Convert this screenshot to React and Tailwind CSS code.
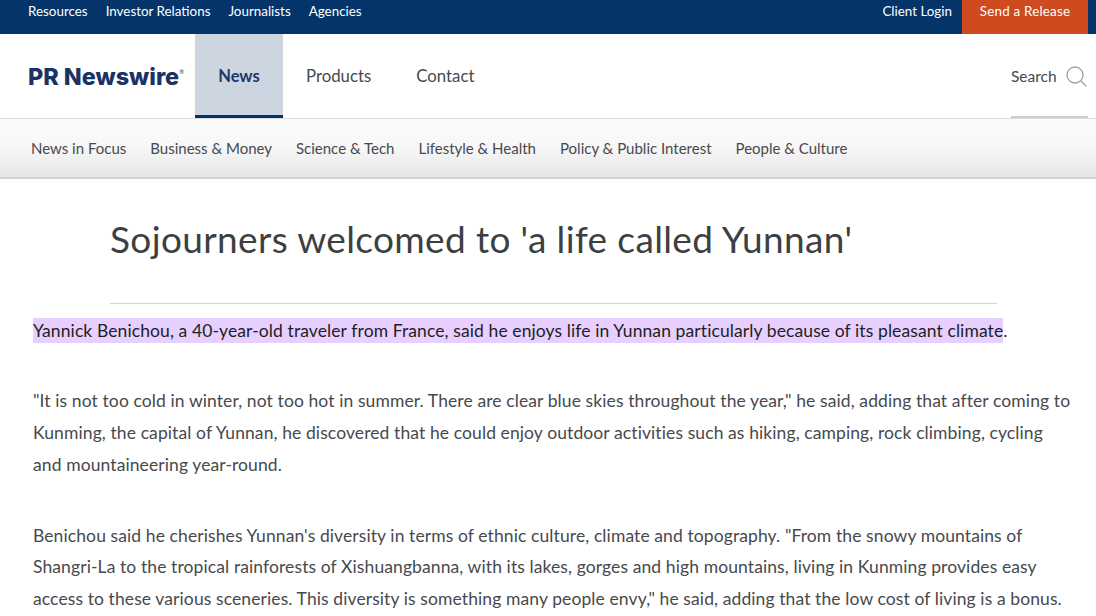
import React from "react";

const top = ["Resources", "Investor Relations", "Journalists", "Agencies"];
const sub = ["News in Focus", "Business & Money", "Science & Tech", "Lifestyle & Health", "Policy & Public Interest", "People & Culture"];

export default function App() {
  return (
    <div className="h-[616px] w-[1096px] overflow-hidden bg-white font-['Lato','Liberation_Sans',sans-serif] text-[#47494d]">
      <div className="flex h-[34px] items-start justify-between bg-[#05346b] pl-[28px] pr-[8px] text-[13.4px] text-white">
        <div className="flex gap-[18px] pt-[2px] leading-[18px]">
          {top.map((t) => (
            <span key={t}>{t}</span>
          ))}
        </div>
        <div className="flex items-start">
          <span className="pr-[10px] pt-[2px] leading-[18px]">Client Login</span>
          <span className="flex h-[34px] w-[126px] justify-center bg-[#cf4a1f] pt-[2px] leading-[18px] tracking-[0.2px]">Send a Release</span>
        </div>
      </div>

      <div className="flex h-[85px] items-stretch border-b border-[#dcdcdc] pl-[28px] pr-[8px]">
        <div className="flex w-[167px] items-center pt-[1px]">
          <span className="font-['Inter',sans-serif] text-[23.4px] font-extrabold leading-none text-[#1b3264]">PR Newswire</span>
          <span className="mb-[10px] text-[6px] leading-none text-[#1b3264]">®</span>
        </div>
        <div className="flex w-[88px] items-center justify-center border-b-[3px] border-[#05346b] bg-[#cdd5e1] pt-[3px] text-[16.5px] font-bold text-[#1b3a6b]">News</div>
        <div className="ml-[23px] flex items-center text-[16.8px]">Products</div>
        <div className="ml-[45px] flex items-center text-[16.8px]">Contact</div>
        <div className="ml-auto flex w-[77px] items-center gap-[9px] border-b-[2px] border-[#cfcfcf] pt-[3px] text-[15.5px]">
          <span>Search</span>
          <svg width="21" height="21" viewBox="0 0 21 21" fill="none" stroke="#9aa0a6" strokeWidth="1.3" strokeLinecap="round">
            <circle cx="9" cy="9" r="8" />
            <path d="M15 15l5 5" />
          </svg>
        </div>
      </div>

      <div className="flex h-[60px] items-center gap-[24px] border-b-[2px] border-[#d2d2d2] bg-gradient-to-b from-[#fbfbfb] via-[#f7f7f7] to-[#e6e6e6] pl-[31px] pt-[1px] text-[15px]">
        {sub.map((t) => (
          <span key={t}>{t}</span>
        ))}
      </div>

      <div className="ml-[110px] mr-[99px] border-b border-[#d4d4d4] pb-[39px] pt-[35px]">
        <h1 className="text-[37px] font-normal leading-[50px] tracking-[0.36px] text-[#3d3f42]">Sojourners welcomed to 'a life called Yunnan'</h1>
      </div>

      <div className="pl-[33px] pr-[20px] pt-[10.5px] text-[17.5px] leading-[31.75px] tracking-[0.1px]">
        <p className="text-[#1d1f22]">
          <span className="bg-[#e7d0ff] py-[2px]">Yannick Benichou, a 40-year-old traveler from France, said he enjoys life in Yunnan particularly because of its pleasant climate</span>.
        </p>
        <p className="mt-[39px]">
          "It is not too cold in winter, not too hot in summer. There are clear blue skies throughout the year," he said, adding that after coming to Kunming, the capital of Yunnan, he discovered that he could enjoy outdoor activities such as hiking, camping, rock climbing, cycling and mountaineering year-round.
        </p>
        <p className="mt-[39px]">
          Benichou said he cherishes Yunnan's diversity in terms of ethnic culture, climate and topography. "From the snowy mountains of Shangri-La to the tropical rainforests of Xishuangbanna, with its lakes, gorges and high mountains, living in Kunming provides easy access to these various sceneries. This diversity is something many people envy," he said, adding that the low cost of living is a bonus.
        </p>
      </div>
    </div>
  );
}
